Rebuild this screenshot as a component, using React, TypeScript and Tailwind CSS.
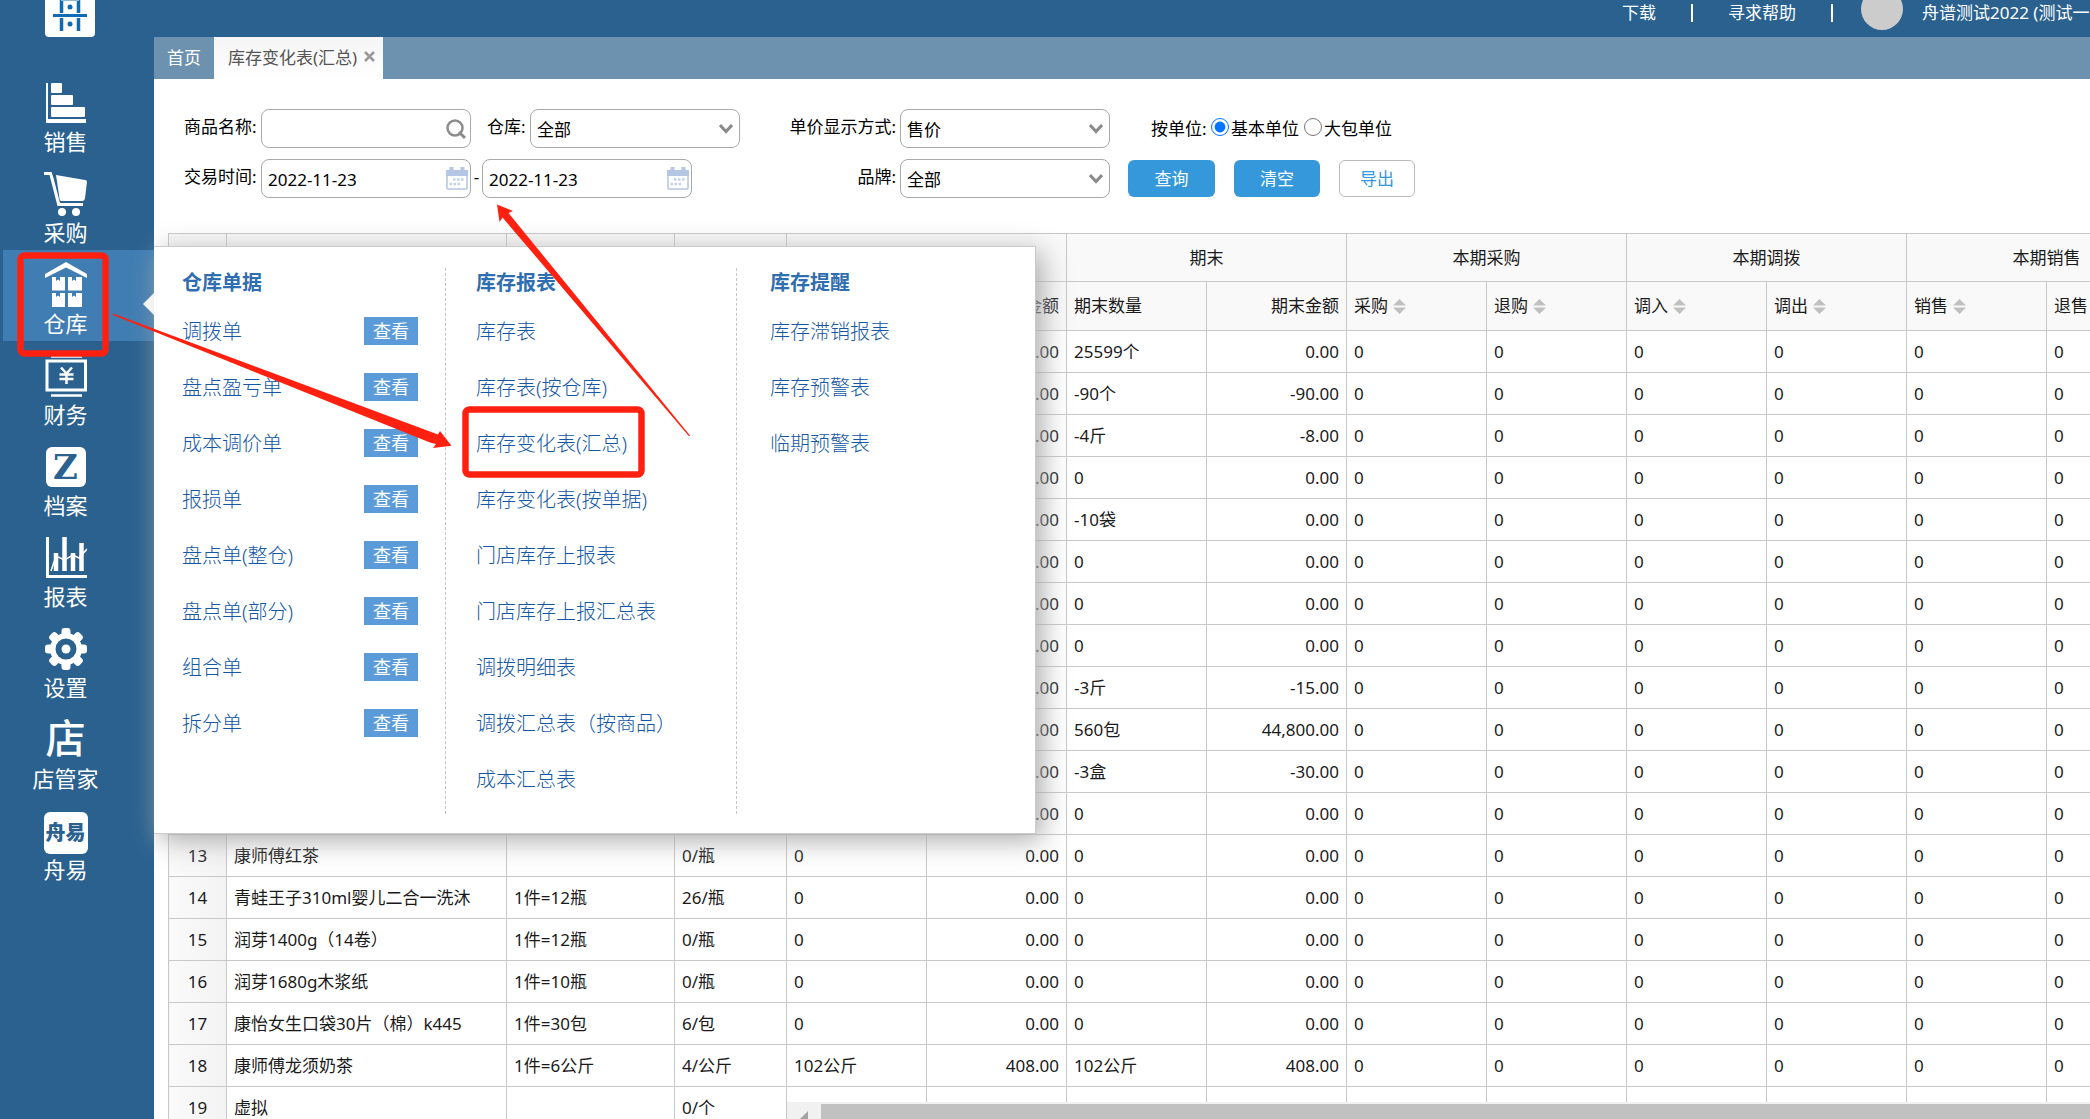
import React, { useState } from 'react';
import { clsx } from 'clsx';

interface NavItem {
  label: string;
  icon: React.ReactNode;
}

interface StockRow {
  name: string;
  spec: string;
  stock: string;
  startQty: string;
  startAmount: string;
  endQty: string;
  endAmount: string;
}

const SalesIcon = () => (
  <svg viewBox="0 0 42 42" className="h-[42px] w-[42px]" fill="#fff">
    <path d="M1 1h2v36h38v4H1z" />
    <rect x="6" y="1" width="11" height="10" rx="1" />
    <rect x="6" y="13" width="22" height="10" rx="1" />
    <rect x="6" y="25" width="34" height="10" rx="1" />
  </svg>
);

const CartIcon = () => (
  <svg viewBox="0 0 44 46" className="h-[46px] w-[44px]" fill="#fff">
    <path d="M0 1h7.5l2 6 6.500 25H39v3H13.500L5.500 4H0z" />
    <path d="M12 4l29 5c1.500.3 2 1 1.900 2.500L41 27c-.3 2-1 3-3 3H18c-1.500 0-2-.6-2.400-2z" />
    <circle cx="18" cy="41" r="4" />
    <circle cx="32" cy="41" r="4" />
  </svg>
);

const WarehouseIcon = () => (
  <svg viewBox="0 0 44 46" className="h-[46px] w-[44px]" fill="#fff">
    <path d="M1 12L22 0l21 12v4L22 5.500 1 16z" />
    <path d="M8 15h4v4l2-1.500 2 1.500v-4h5v13.500H8z" />
    <path d="M24 15h4v4l2-1.500 2 1.500v-4h6v13.500H24z" />
    <path d="M8 31h4v4l2-1.500 2 1.500v-4h5v14H8z" />
    <path d="M24 31h4v4l2-1.500 2 1.500v-4h6v14H24z" />
  </svg>
);

const FinanceIcon = () => (
  <svg viewBox="0 0 42 42" className="h-[42px] w-[42px]" fill="none" stroke="#fff">
    <path d="M6 1.500h31M6 40.500h31" strokeWidth="2.500" />
    <rect x="2" y="6" width="38.500" height="29" strokeWidth="3" />
    <path d="M16 12.500l5.500 6 5.500-6M14.500 19.500h14M14.500 24h14M21.500 18v11" strokeWidth="2.500" />
  </svg>
);

const ArchiveIcon = () => (
  <span
    aria-hidden="true"
    className="flex h-10 w-10 items-center justify-center rounded-md bg-white font-['DejaVu_Serif',serif] text-[34px] leading-none font-bold text-[#2a618f]"
  >
    Z
  </span>
);

const ReportIcon = () => (
  <svg viewBox="0 0 42 42" className="h-[42px] w-[42px]" fill="none" stroke="#fff">
    <path d="M2.500 0v39.500H42" strokeWidth="3" />
    <path d="M11 16v18M19.500 0v34M28 16v18M36.500 6v28" strokeWidth="4.500" />
    <path d="M6 34l5-15 8.500 4 8.500-5 6 3 8-9" strokeWidth="1.500" />
  </svg>
);

const GearIcon = () => (
  <svg viewBox="-21 -21 42 42" className="h-[42px] w-[42px]" fill="#fff">
    {[0, 45, 90, 135].map((angle) => (
      <rect key={angle} x="-4.500" y="-21" width="9" height="42" rx="3" transform={`rotate(${angle})`} />
    ))}
    <circle r="16" />
    <circle r="10.500" fill="#2a618f" />
    <circle r="4.500" />
  </svg>
);

const StoreIcon = () => (
  <span aria-hidden="true" className="mb-1 text-[40px] leading-none font-medium">
    店
  </span>
);

const ZhouyiIcon = () => (
  <span
    aria-hidden="true"
    className="mt-1 flex h-[42px] w-11 items-center justify-center rounded-md bg-white text-[20px] leading-none font-black text-[#2a618f]"
  >
    舟易
  </span>
);

const navItems: NavItem[] = [
  { label: '销售', icon: <SalesIcon /> },
  { label: '采购', icon: <CartIcon /> },
  { label: '仓库', icon: <WarehouseIcon /> },
  { label: '财务', icon: <FinanceIcon /> },
  { label: '档案', icon: <ArchiveIcon /> },
  { label: '报表', icon: <ReportIcon /> },
  { label: '设置', icon: <GearIcon /> },
  { label: '店管家', icon: <StoreIcon /> },
  { label: '舟易', icon: <ZhouyiIcon /> },
];

const documentLinks = ['调拨单', '盘点盈亏单', '成本调价单', '报损单', '盘点单(整仓)', '盘点单(部分)', '组合单', '拆分单'];

const reportLinks = [
  '库存表',
  '库存表(按仓库)',
  '库存变化表(汇总)',
  '库存变化表(按单据)',
  '门店库存上报表',
  '门店库存上报汇总表',
  '调拨明细表',
  '调拨汇总表（按商品）',
  '成本汇总表',
];

const alertLinks = ['库存滞销报表', '库存预警表', '临期预警表'];

const row = (
  endQty = '0',
  endAmount = '0.00',
  name = '',
  spec = '',
  stock = '',
  startQty = name && '0',
  startAmount = '0.00',
): StockRow => ({ name, spec, stock, startQty, startAmount, endQty, endAmount });

const rows: StockRow[] = [
  row('25599个', '0.00'),
  row('-90个', '-90.00'),
  row('-4斤', '-8.00'),
  row(),
  row('-10袋', '0.00'),
  row(),
  row(),
  row(),
  row('-3斤', '-15.00'),
  row('560包', '44,800.00'),
  row('-3盒', '-30.00'),
  row(),
  row('0', '0.00', '康师傅红茶', '', '0/瓶'),
  row('0', '0.00', '青蛙王子310ml婴儿二合一洗沐', '1件=12瓶', '26/瓶'),
  row('0', '0.00', '润芽1400g（14卷）', '1件=12瓶', '0/瓶'),
  row('0', '0.00', '润芽1680g木浆纸', '1件=10瓶', '0/瓶'),
  row('0', '0.00', '康怡女生口袋30片（棉）k445', '1件=30包', '6/包'),
  row('102公斤', '408.00', '康师傅龙须奶茶', '1件=6公斤', '4/公斤', '102公斤', '408.00'),
  row('0', '0.00', '虚拟', '', '0/个'),
];

const movementColumns = ['采购', '退购', '调入', '调出', '销售', '退售'];

const SortIcon = () => (
  <svg viewBox="0 0 13 15" className="h-[15px] w-[13px]" fill="#c0c0c0">
    <path d="M6.500 0L13 6.500H0zM6.500 15L13 8.500H0z" />
  </svg>
);

const CalendarIcon = () => (
  <svg viewBox="0 0 22 23" className="pointer-events-none absolute top-2 right-[3px] h-[23px] w-[22px]">
    <rect x="1" y="4" width="20" height="18" rx="1" fill="#fff" stroke="#b4c6e4" strokeWidth="1.500" />
    <path d="M0 3h22v6H0zM3.500 0h4v3h-4zM14.500 0h4v3h-4z" fill="#b4c6e4" />
    <path d="M7 12.500h12M3.500 17h12" stroke="#c3d1ea" strokeWidth="2.500" strokeDasharray="2.500 1.500" />
  </svg>
);

interface SelectBoxProps {
  id: string;
  value: string;
}

const SelectBox: React.FC<SelectBoxProps> = ({ id, value }) => (
  <div className="relative">
    <select
      id={id}
      className="h-[39px] w-[210px] appearance-none rounded-lg border border-[#a9a9a9] bg-white pt-0.5 pl-1.5 text-[17px]"
    >
      <option>{value}</option>
    </select>
    <svg viewBox="0 0 14 10" className="pointer-events-none absolute top-[15px] right-[7px] h-[10px] w-[14px]">
      <path d="M1 1l6 6.500L13 1" fill="none" stroke="#8a8a8a" strokeWidth="3" />
    </svg>
  </div>
);

interface DateBoxProps {
  label: string;
  id: string;
}

const DateBox: React.FC<DateBoxProps> = ({ label, id }) => (
  <div className="relative">
    <input
      id={id}
      aria-label={label}
      defaultValue="2022-11-23"
      className="h-[39px] w-[210px] rounded-lg border border-[#a9a9a9] pt-0.5 pl-1.5 text-[17px]"
    />
    <CalendarIcon />
  </div>
);

const Sidebar = () => (
  <aside className="w-[154px] shrink-0 bg-[#2a618f] text-white">
    <svg viewBox="0 0 50 37" className="ml-[45px] h-[37px] w-[50px]">
      <path d="M0 0h50v33q0 4-4 4H4q-4 0-4-4z" fill="#fff" />
      <path d="M16.500 0v13M16.500 18v13M33.500 0v13M33.500 18v13" stroke="#0f6bb4" strokeWidth="3.500" />
      <path d="M8 15.500h34" stroke="#0f6bb4" strokeWidth="3" />
      <path d="M16 .5h18" stroke="#8db9dc" strokeWidth="1" />
      <circle cx="25" cy="7" r="2.500" fill="#0f6bb4" />
      <circle cx="25" cy="24" r="2.500" fill="#0f6bb4" />
    </svg>
    <nav className="mt-[31px] ml-[3px]">
      {navItems.map((item) => (
        <a
          key={item.label}
          href="#"
          className={clsx('flex h-[91px] flex-col items-center pt-[14px] pr-[26px]', item.label === '仓库' && 'bg-[#3f7db2]')}
        >
          <span className="flex h-[42px] items-center">{item.icon}</span>
          <span className="text-[22px] leading-[34px]">{item.label}</span>
        </a>
      ))}
    </nav>
  </aside>
);

const TopBar = () => (
  <header className="h-[37px] bg-[#2a618f] text-[17px] text-white">
    <div className="flex h-[26px] items-center justify-end">
      <a href="#">下载</a>
      <span className="mx-[35px] h-[18px] w-[2px] bg-white" />
      <a href="#">寻求帮助</a>
      <span className="mr-[28px] ml-[35px] h-[18px] w-[2px] bg-white" />
      <span className="mb-2 h-[42px] w-[42px] rounded-full bg-[#ccc]" />
      <span className="ml-[19px] w-[168px] overflow-hidden whitespace-nowrap">舟谱测试2022 (测试一</span>
    </div>
  </header>
);

const TabBar = () => (
  <div className="flex h-[42px] bg-[#6d92b0] text-[17px]">
    <button type="button" className="px-[13px] text-white">
      首页
    </button>
    <div className="flex items-center gap-[7px] bg-gradient-to-b from-[#f5f5f5] to-white pr-2 pl-[14px] text-[#555]">
      <span>库存变化表(汇总)</span>
      <button type="button" aria-label="关闭" className="mb-1">
        <svg viewBox="0 0 11 11" className="h-[11px] w-[11px]">
          <path d="M1 1l9 9M10 1l-9 9" stroke="#999" strokeWidth="2.500" />
        </svg>
      </button>
    </div>
  </div>
);

const FilterForm = () => {
  const [unit, setUnit] = useState('base');

  return (
    <form className="flex flex-col gap-[11px] pt-[30px] pb-[35px] pl-[30px] text-[17px] text-black">
      <div className="flex h-[39px] items-center">
        <label htmlFor="product" className="w-[77px] pb-1">
          商品名称:
        </label>
        <div className="relative">
          <input id="product" className="h-[39px] w-[210px] rounded-lg border border-[#a9a9a9] px-1.5" />
          <svg viewBox="0 0 20 20" className="pointer-events-none absolute top-[10px] right-[5px] h-5 w-5" fill="none" stroke="#8c8c8c">
            <circle cx="9" cy="9" r="7.500" strokeWidth="2.500" />
            <path d="M13 13l6 6" strokeWidth="3" />
          </svg>
        </div>
        <label htmlFor="warehouse" className="w-[59px] pb-1 pl-4">
          仓库:
        </label>
        <SelectBox id="warehouse" value="全部" />
        <label htmlFor="price" className="w-[160px] pr-1 pb-1 text-right">
          单价显示方式:
        </label>
        <SelectBox id="price" value="售价" />
        <fieldset className="ml-[41px] flex items-center">
          <span className="w-[60px]">按单位:</span>
          <input
            id="unit-base"
            type="radio"
            name="unit"
            className="mr-[2px] mb-1 h-[18px] w-[18px]"
            checked={unit === 'base'}
            onChange={() => setUnit('base')}
          />
          <label htmlFor="unit-base">基本单位</label>
          <input
            id="unit-pack"
            type="radio"
            name="unit"
            className="mr-[2px] mb-1 ml-[5px] h-[18px] w-[18px]"
            checked={unit === 'pack'}
            onChange={() => setUnit('pack')}
          />
          <label htmlFor="unit-pack">大包单位</label>
        </fieldset>
      </div>
      <div className="flex h-[39px] items-center">
        <label htmlFor="date-from" className="w-[77px] pb-1">
          交易时间:
        </label>
        <DateBox id="date-from" label="开始日期" />
        <span className="w-[11px] pb-1 text-center">-</span>
        <DateBox id="date-to" label="结束日期" />
        <label htmlFor="brand" className="w-[208px] pr-1 pb-1 text-right">
          品牌:
        </label>
        <SelectBox id="brand" value="全部" />
        <div className="ml-[18px] flex gap-[19px]">
          <button type="button" className="h-[37px] w-[87px] rounded-md bg-[#3498db] text-white">
            查询
          </button>
          <button type="button" className="h-[37px] w-[86px] rounded-md bg-[#3498db] text-white">
            清空
          </button>
          <button type="button" className="h-[37px] w-[76px] rounded-md border border-[#bbb] text-[#3498db]">
            导出
          </button>
        </div>
      </div>
    </form>
  );
};

const StockTable = () => (
  <div className="relative ml-[14px] min-h-0 flex-1 overflow-hidden">
    <table className="w-[2018px] table-fixed border-collapse text-[17px] text-[#1a1a1a] [&_td]:border [&_td]:border-[#c8c8c8] [&_td]:px-[7px] [&_th]:border [&_th]:border-[#c8c8c8] [&_th]:px-[7px] [&_th]:font-normal">
      <colgroup>
        <col className="w-[58px]" />
        <col className="w-[280px]" />
        <col className="w-[168px]" />
        <col className="w-[112px]" />
        {Array.from({ length: 10 }, (_, i) => (
          <col key={i} className="w-[140px]" />
        ))}
      </colgroup>
      <thead className="bg-[#f9f9f9]">
        <tr className="h-[48px]">
          <th rowSpan={2} />
          <th rowSpan={2} />
          <th rowSpan={2} />
          <th rowSpan={2} />
          <th colSpan={2} />
          <th colSpan={2}>期末</th>
          <th colSpan={2}>本期采购</th>
          <th colSpan={2}>本期调拨</th>
          <th colSpan={2}>本期销售</th>
        </tr>
        <tr className="h-[49px]">
          <th />
          <th className="text-right">金额</th>
          <th className="text-left">期末数量</th>
          <th className="text-right">期末金额</th>
          {movementColumns.map((name) => (
            <th key={name}>
              <span className="flex items-center gap-[5px]">
                {name}
                <SortIcon />
              </span>
            </th>
          ))}
        </tr>
      </thead>
      <tbody>
        {rows.map((r, i) => (
          <tr key={i} className="h-[42px] whitespace-nowrap">
            <td className="bg-gradient-to-r from-[#fafafa] to-[#f3f3f3] text-center">{r.name && i + 1}</td>
            <td>{r.name}</td>
            <td>{r.spec}</td>
            <td>{r.stock}</td>
            <td>{r.startQty}</td>
            <td className="text-right">{r.startAmount}</td>
            <td>{r.endQty}</td>
            <td className="text-right">{r.endAmount}</td>
            {movementColumns.map((name) => (
              <td key={name}>0</td>
            ))}
          </tr>
        ))}
      </tbody>
    </table>
    {/* horizontal scrollbar of the unfrozen columns */}
    <div className="absolute right-0 bottom-0 left-[619px] flex h-[17px] bg-[#f1f1f1]">
      <svg viewBox="0 0 34 17" className="h-[17px] w-[34px]">
        <path d="M21 9v8h-8z" fill="#a3a3a3" />
      </svg>
      <div className="mt-[2px] flex-1 bg-[#c1c1c1]" />
    </div>
  </div>
);

interface MenuColumnProps {
  title: string;
  links: string[];
  className: string;
  withView?: boolean;
}

const MenuColumn: React.FC<MenuColumnProps> = ({ title, links, className, withView }) => (
  <section className={clsx('h-[546px]', className)}>
    <h3 className="mb-[6px] text-[20px] leading-[30px] font-bold text-[#2f6eb0]">{title}</h3>
    <ul>
      {links.map((link) => (
        <li key={link} className="flex h-[56px] items-center justify-between">
          <a href="#" className="text-[20px] leading-[30px] font-light whitespace-nowrap">
            {link}
          </a>
          {withView && (
            <button type="button" className="mb-[2px] h-[28px] w-[54px] bg-[#5b9bd9] text-[18px] leading-[28px] text-white">
              查看
            </button>
          )}
        </li>
      ))}
    </ul>
  </section>
);

const WarehouseMenu = () => (
  <div className="absolute top-[246px] left-[154px] flex h-[588px] w-[882px] border border-l-0 border-[#ccc] bg-white pt-[21px] text-[#1458a5] shadow-[6px_6px_26px_#aaa]">
    <svg viewBox="0 0 11 22" className="absolute top-[46px] -left-[11px] h-[22px] w-[11px]">
      <path d="M11 0v22L0 11z" fill="#f3f3f3" />
    </svg>
    <MenuColumn
      title="仓库单据"
      links={documentLinks}
      withView
      className="w-[292px] border-r border-dashed border-[#c4c4c4] pr-[27px] pl-7"
    />
    <MenuColumn title="库存报表" links={reportLinks} className="w-[291px] border-r border-dashed border-[#c4c4c4] pl-[30px]" />
    <MenuColumn title="库存提醒" links={alertLinks} className="flex-1 pl-[33px]" />
  </div>
);

// Red boxes and arrows pointing at the menu path
const Annotations = () => (
  <svg width="700" height="490" className="pointer-events-none absolute top-0 left-0" fill="none">
    <g stroke="#ff2010" strokeWidth="6.500">
      <rect x="20.500" y="255.500" width="85" height="98" rx="4" />
      <rect x="465.500" y="409.500" width="176" height="65" rx="4" />
    </g>
    <g fill="#ff2010">
      <path d="M113 313.500L438 434.500L440 431L451.500 445.800L433 448L436 444L430 442.500L113 315z" />
      <path d="M497 204.500L513 211L508.500 213L690 435.500L689 436.200L502.500 217.500L499.500 222z" />
    </g>
  </svg>
);

export default function App() {
  return (
    <div className="relative flex h-screen overflow-hidden bg-white font-['Noto_Sans','Noto_Sans_CJK_SC',sans-serif]">
      <Sidebar />
      <main className="flex min-w-0 flex-1 flex-col">
        <TopBar />
        <TabBar />
        <FilterForm />
        <StockTable />
      </main>
      <WarehouseMenu />
      <Annotations />
    </div>
  );
}
